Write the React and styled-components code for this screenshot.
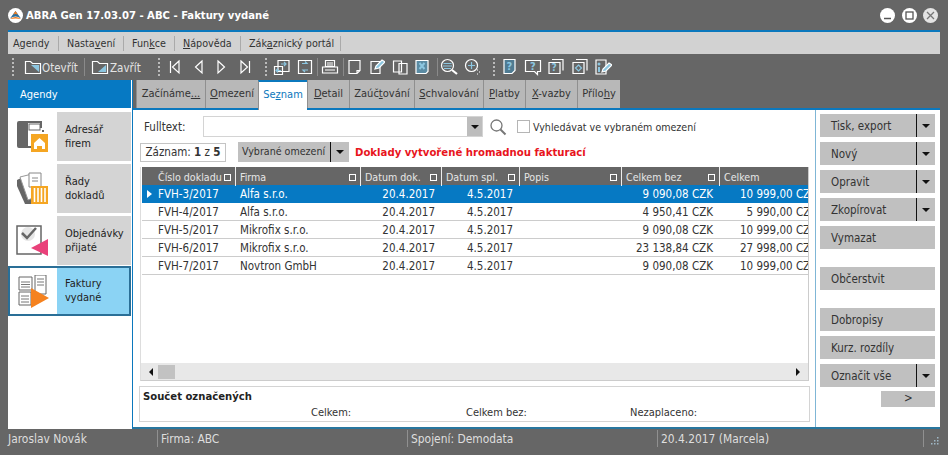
import React from "react";
import styled, { createGlobalStyle } from "styled-components";

const Global = createGlobalStyle`
  html, body { margin: 0; padding: 0; background: #666; overflow: hidden; }
  body { font-family: "DejaVu Sans Condensed", "DejaVu Sans", sans-serif; font-size: 11.5px; color: #333; }
  u { text-underline-offset: 1px; }
`;

const Window = styled.div`
  width: 948px;
  height: 455px;
  background: #666;
  display: flex;
  flex-direction: column;
`;

const TitleBar = styled.div`
  height: 30px;
  display: flex;
  align-items: center;
  padding: 0 10px 0 8px;
  color: #fff;
`;
const Title = styled.div`
  flex: 1;
  margin-left: 3px;
  font-size: 11.2px;
  font-weight: 700;
`;
const WinButton = styled.div`
  width: 15px;
  height: 15px;
  margin-left: 6.5px;
  border-radius: 50%;
  background: ${(p) => p.$bg || "#fff"};
  display: flex;
  align-items: center;
  justify-content: center;
`;

const MenuBar = styled.div`
  margin: 0 8px;
  height: 22px;
  border-top: 2px solid #0b78bd;
  background: #d2d2d2;
  display: flex;
  align-items: center;
  font-size: 10.7px;
`;
const MenuItem = styled.div`
  height: 15px;
  line-height: 15px;
  width: ${(p) => p.$w}px;
  box-sizing: border-box;
  padding-left: 8px;
  border-right: 1px solid #aaa;
  white-space: nowrap;
  &:first-child { padding-left: 5px; }
`;

const Toolbar = styled.div`
  height: 26px;
  margin: 0 8px;
  padding-left: 4px;
  display: flex;
  align-items: center;
  color: #e4e4e4;
`;
const Grip = styled.div`
  width: 0;
  height: 18px;
  margin-left: ${(p) => p.$ml || 0}px;
  border-left: 2px dotted #bbb;
`;
const ToolSep = styled.div`
  width: 1px;
  height: 18px;
  margin-left: ${(p) => p.$ml || 0}px;
  background: #8a8a8a;
`;
const ToolIcon = styled.svg`
  width: ${(p) => p.$w || 18}px;
  height: 18px;
  margin-left: ${(p) => p.$ml || 0}px;
  flex: none;
  fill: none;
  stroke: #fff;
  stroke-width: 1.2;
`;
const ToolLabel = styled.span`
  width: ${(p) => p.$w}px;
  margin-left: ${(p) => p.$ml || 0}px;
  padding-top: 1px;
  flex: none;
  white-space: nowrap;
`;

const Body = styled.div`
  flex: 1;
  display: flex;
  margin: 0 8px;
  min-height: 0;
`;
const LeftColumn = styled.div`
  width: 123px;
  flex: none;
  display: flex;
  flex-direction: column;
  background: #fff;
`;
const AgendaHead = styled.div`
  height: 28px;
  line-height: 29px;
  padding-left: 12px;
  background: #0679c3;
  color: #fff;
  font-size: 11px;
`;
const AgendaList = styled.div`
  padding-top: 4px;
  display: flex;
  flex-direction: column;
  gap: 3px;
  background: #fff;
  flex: 1;
`;
const AgendaItem = styled.div`
  height: ${(p) => (p.$active ? 46 : 49)}px;
  display: flex;
  border: ${(p) => (p.$active ? "2px solid #2a6f97" : "none")};
  background: ${(p) => (p.$active ? "#8bd3f4" : "#d4d4d4")};
  margin-top: ${(p) => (p.$active ? -2 : 0)}px;
`;
const AgendaIconBox = styled.div`
  width: ${(p) => (p.$active ? 47 : 49)}px;
  background: #fff;
  display: flex;
  align-items: center;
  justify-content: center;
  flex: none;
`;
const AgendaText = styled.div`
  padding-left: 8px;
  align-self: center;
  line-height: 14px;
  color: #222;
  font-size: 11px;
`;

const DoubleRule = styled.div`
  width: 2px;
  flex: none;
  background: linear-gradient(90deg, #fff 0 1px, #0b78bd 1px);
`;

const Main = styled.div`
  flex: 1;
  display: flex;
  flex-direction: column;
  min-width: 0;
`;
const Tabs = styled.div`
  height: 28px;
  display: flex;
  padding-left: 3px;
  font-size: 11px;
`;
const Tab = styled.div`
  width: ${(p) => p.$w}px;
  text-align: center;
  line-height: ${(p) => (p.$active ? 26 : 28)}px;
  white-space: nowrap;
  background: ${(p) => (p.$active ? "#fff" : "#b8b8b8")};
  color: ${(p) => (p.$active ? "#0b78bd" : "#333")};
  border-left: 1px solid #8f8f8f;
  box-sizing: border-box;
  height: ${(p) => (p.$active ? 30 : 28)}px;
  border-top: ${(p) => (p.$active ? "2px solid #0b78bd" : "none")};
  position: relative;
  z-index: 1;
`;
const Content = styled.div`
  flex: 1;
  display: flex;
  background: #fff;
  border-top: 2px solid #0b78bd;
  border-bottom: 2px solid #28779f;
  min-height: 0;
`;
const Center = styled.div`
  width: 683px;
  flex: none;
  box-sizing: border-box;
  padding: 6px 6px 5px 6px;
  border-right: 1px solid #7fb6d6;
  display: flex;
  flex-direction: column;
`;
const FilterRow = styled.div`
  height: 21px;
  display: flex;
  align-items: center;
`;
const FilterLabel = styled.div`
  width: 64px;
  padding-left: 5px;
  box-sizing: border-box;
`;
const Combo = styled.div`
  width: 280px;
  height: 21px;
  box-sizing: border-box;
  border: 1px solid #d4d4d4;
  display: flex;
  justify-content: flex-end;
`;
const ComboArrow = styled.div`
  width: 15px;
  background: #bdbdbd;
  display: flex;
  align-items: center;
  justify-content: center;
`;
const Caret = styled.div`
  width: 0;
  height: 0;
  border-left: 4px solid transparent;
  border-right: 4px solid transparent;
  border-top: 4px solid #111;
`;
const SearchIcon = styled.svg`
  width: 18px;
  height: 18px;
  margin-left: 6px;
  fill: none;
  stroke: #777;
  stroke-width: 1.3;
`;
const CheckBox = styled.div`
  width: 13px;
  height: 13px;
  margin-left: 10px;
  box-sizing: border-box;
  border: 1px solid #b5b5b5;
`;
const CheckLabel = styled.div`
  margin-left: 3px;
  font-size: 10.6px;
`;
const InfoRow = styled.div`
  height: 20px;
  margin-top: 5px;
  display: flex;
  align-items: center;
  padding-left: 1px;
`;
const Counter = styled.div`
  width: 86px;
  height: 19px;
  box-sizing: border-box;
  border: 1px solid #c4c4c4;
  line-height: 17px;
  text-align: center;
  white-space: nowrap;
  b { font-weight: 700; }
`;
const SplitButton = styled.div`
  height: ${(p) => p.$h || 23}px;
  width: ${(p) => p.$w || 115}px;
  margin-left: ${(p) => p.$ml || 0}px;
  margin-top: ${(p) => p.$mt || 0}px;
  flex: none;
  display: flex;
  background: #c0c0c0;
  color: #333;
`;
const SplitLabel = styled.div`
  flex: 1;
  white-space: nowrap;
  line-height: ${(p) => p.$lh || 24}px;
  padding-left: ${(p) => p.$pl || 11}px;
  font-size: ${(p) => p.$fs || 11.5}px;
`;
const SplitArrow = styled.div`
  width: 18px;
  flex: none;
  border-left: 1px solid #111;
  display: flex;
  align-items: center;
  justify-content: center;
`;
const RedNote = styled.div`
  margin-left: 6px;
  color: #e8141c;
  font-weight: 700;
  font-size: 11.25px;
`;

const TableWrap = styled.div`
  flex: 1;
  margin: 5px 0 0 1px;
  width: 669px;
  box-sizing: border-box;
  border-left: 1px solid #ddd;
  border-right: 1px solid #ccc;
  border-bottom: 1px solid #ccc;
  display: flex;
  flex-direction: column;
  min-height: 0;
  overflow: hidden;
`;
const TableGrid = styled.div`
  flex: 1;
  overflow: hidden;
  padding-left: 1px;
`;
const Row = styled.div`
  display: grid;
  grid-template-columns: 94px 125px 81px 78px 102px 98px 104px;
  width: 682px;
  height: 18px;
  line-height: 18px;
  box-sizing: border-box;
  background: ${(p) => (p.$selected ? "#0679c3" : "#fff")};
  color: ${(p) => (p.$selected ? "#fff" : "#333")};
  border-bottom: ${(p) => (p.$selected ? "none" : "1px solid #ccc")};
  white-space: nowrap;
`;
const HeadRow = styled(Row)`
  background: #666;
  color: #e6e6e6;
  border: none;
  font-size: 10.6px;
`;
const HeadCell = styled.div`
  display: flex;
  align-items: center;
  justify-content: space-between;
  padding: 1px 4px 0 ${(p) => p.$pl || 4}px;
  border-right: 1px solid #eee;
  box-sizing: border-box;
  &:last-child { border: none; }
`;
const FilterBox = styled.span`
  width: 7px;
  height: 7px;
  box-sizing: border-box;
  border: 1px solid #fff;
`;
const Cell = styled.div`
  padding: ${(p) => (p.$right ? "0 7px 0 0" : `0 0 0 ${p.$pl || 4}px`)};
  text-align: ${(p) => (p.$right ? "right" : "left")};
  position: relative;
`;
const RowMarker = styled.span`
  position: absolute;
  left: 5px;
  top: 5px;
  border-left: 5px solid #fff;
  border-top: 4px solid transparent;
  border-bottom: 4px solid transparent;
`;
const ScrollBar = styled.div`
  height: 17px;
  background: #e8e8e8;
  display: flex;
  align-items: center;
  padding: 0 8px;
`;
const ScrollLeft = styled.div`
  border-right: 4px solid #111;
  border-top: 4px solid transparent;
  border-bottom: 4px solid transparent;
`;
const ScrollRight = styled.div`
  border-left: 4px solid #111;
  border-top: 4px solid transparent;
  border-bottom: 4px solid transparent;
`;
const ScrollThumb = styled.div`
  width: 17px;
  height: 14px;
  margin-left: 5px;
  background: #c2c2c2;
  flex: none;
`;
const ScrollTrack = styled.div`
  flex: 1;
`;
const Summary = styled.div`
  height: 36px;
  margin-top: 5px;
  width: 671px;
  box-sizing: border-box;
  border: 1px solid #d4d4d4;
  padding: 2px 0 0 3px;
`;
const SummaryTitle = styled.div`
  font-weight: 700;
  font-size: 11.2px;
  color: #222;
  line-height: 15px;
`;
const SummaryRow = styled.div`
  display: flex;
  line-height: 16px;
  margin-top: 1px;
  font-size: 11px;
`;
const SummaryLabel = styled.span`
  width: ${(p) => p.$w}px;
  flex: none;
`;

const Side = styled.div`
  flex: 1;
  padding: 4px 0 0 4px;
  display: flex;
  flex-direction: column;
  gap: 5px;
`;

const StatusBar = styled.div`
  height: 25px;
  margin: 0 8px;
  display: flex;
  align-items: flex-start;
  color: #dedede;
  padding-top: 1px;
  font-size: 11.9px;
`;
const StatusCell = styled.div`
  width: ${(p) => p.$w}px;
  height: 17px;
  line-height: 18px;
  padding-left: ${(p) => p.$pl ?? 3}px;
  box-sizing: border-box;
  border-right: 1px solid #909090;
  flex: none;
`;
const ResizeGrip = styled.svg`
  width: 10px;
  height: 10px;
  margin: 7px 0 0 5px;
  fill: #9fb8c6;
`;

function Logo() {
  return (
    <svg width="15" height="15" viewBox="0 0 15 15">
      <circle cx="7.500" cy="7.500" r="7.500" fill="#fff" />
      <path d="M2 10.500 L7.500 3 L13 10.500 Q7.500 6.500 2 10.500z" fill="#2d6f9c" />
      <path d="M2 11 Q7.500 6.800 13 11 Q7.500 9.800 2 11z" fill="#ef7d22" />
      <path d="M5.200 6.500 L7.500 3 L9.800 6.500 Q7.500 5.500 5.200 6.500z" fill="#ef7d22" />
    </svg>
  );
}

const Folder = ({ ml, variant }) => (
  <ToolIcon $ml={ml} viewBox="0 0 18 18">
    <path d="M1.500 3.500h5l2 2h8v10h-15z" />
    <path d={variant ? "M15 7v7H7z" : "M7 7h8v7z"} fill="#8cc6e0" stroke="none" />
  </ToolIcon>
);

const Nav = ({ ml, d, line }) => (
  <ToolIcon $ml={ml} $w={12} viewBox="0 0 12 18">
    <path d={d} />
    {line && <path d={line} />}
  </ToolIcon>
);

const Tool = ({ ml, w, children }) => (
  <ToolIcon $ml={ml} $w={w} viewBox={`0 0 ${w || 18} 18`}>
    {children}
  </ToolIcon>
);

const Blue = "#8cc6e0";

const AgendaIcons = {
  firms: (
    <svg width="33" height="33" viewBox="0 0 33 33">
      <path d="M1 3a2 2 0 0 1 2-2h23v7h-2v20H3a2 2 0 0 1-2-2z" fill="#666" />
      <path d="M12 3h12v23H12z" fill="#fff" />
      <rect x="13" y="4" width="11" height="6" fill="#fff" stroke="#666" />
      <path d="M26 10h2v2h-2z" fill="#666" />
      <rect x="15" y="14" width="17" height="18" fill="#f5a623" />
      <path d="M18 23l5.500-5 5.500 5v6h-3v-3h-5v3h-3z" fill="#fff" />
    </svg>
  ),
  series: (
    <svg width="33" height="33" viewBox="0 0 33 33">
      <path d="M1 8l6-3 10 27H9l-8-18z" fill="#666" />
      <path d="M4 5l12-3 6 22-10 4z" fill="#fff" stroke="#999" />
      <path d="M13 1h12v14H13z" fill="#fff" stroke="#888" />
      <path d="M16 6h6M16 9h6" stroke="#888" />
      <path d="M15 14h17v18H15z" fill="#f5a623" />
      <path d="M18.500 16v14M22 16v14M25.500 16v14M29 16v14" stroke="#fff" strokeWidth="1.600" />
    </svg>
  ),
  orders: (
    <svg width="33" height="33" viewBox="0 0 33 33">
      <rect x="1" y="2" width="24" height="28" fill="#fff" stroke="#666" strokeWidth="1.500" />
      <circle cx="12" cy="10" r="7" fill="#e6e6e6" />
      <path d="M6 9l5 5 9-10" fill="none" stroke="#666" strokeWidth="2.500" />
      <path d="M32 15v17L15 24z" fill="#e9417a" />
    </svg>
  ),
  invoices: (
    <svg width="33" height="33" viewBox="0 0 33 33">
      <path d="M2 2h13v13H2zM18 0h11v19H18zM2 17h12v13H2z" fill="#fff" stroke="#666" />
      <path d="M4 7h9M4 9.500h9M4 12h9M20 4h7M20 7h7M20 10h7M4 21h8M4 24h8M4 27h8" stroke="#777" />
      <path d="M14 13l18 10-18 10z" fill="#f5821f" />
    </svg>
  ),
};

const columns = ["Číslo dokladu", "Firma", "Datum dok.", "Datum spl.", "Popis", "Celkem bez", "Celkem"];
const rows = [
  ["FVH-3/2017", "Alfa s.r.o.", "20.4.2017", "4.5.2017", "9 090,08 CZK", "10 999,00 CZK"],
  ["FVH-4/2017", "Alfa s.r.o.", "20.4.2017", "4.5.2017", "4 950,41 CZK", "5 990,00 CZK"],
  ["FVH-5/2017", "Mikrofix s.r.o.", "20.4.2017", "4.5.2017", "9 090,08 CZK", "10 999,00 CZK"],
  ["FVH-6/2017", "Mikrofix s.r.o.", "20.4.2017", "4.5.2017", "23 138,84 CZK", "27 998,00 CZK"],
  ["FVH-7/2017", "Novtron GmbH", "20.4.2017", "4.5.2017", "9 090,08 CZK", "10 999,00 CZK"],
];

const Split = ({ children }) => (
  <SplitButton>
    <SplitLabel>{children}</SplitLabel>
    <SplitArrow><Caret /></SplitArrow>
  </SplitButton>
);
const Plain = ({ children, mt }) => (
  <SplitButton $mt={mt}>
    <SplitLabel>{children}</SplitLabel>
  </SplitButton>
);

export default function App() {
  return (
    <Window>
      <Global />
      <TitleBar>
        <Logo />
        <Title>ABRA Gen 17.03.07 - ABC - Faktury vydané</Title>
        <WinButton>
          <svg width="9" height="9" viewBox="0 0 9 9"><path d="M1 7.500h7" stroke="#555" strokeWidth="1.500" /></svg>
        </WinButton>
        <WinButton>
          <svg width="9" height="9" viewBox="0 0 9 9"><rect x="1" y="1" width="7" height="7" fill="none" stroke="#555" strokeWidth="1.300" /></svg>
        </WinButton>
        <WinButton $bg="#e4e4e4">
          <svg width="9" height="9" viewBox="0 0 9 9"><path d="M1 1l7 7M8 1l-7 7" stroke="#777" strokeWidth="1.300" /></svg>
        </WinButton>
      </TitleBar>

      <MenuBar>
        <MenuItem $w={51}>A<u>g</u>endy</MenuItem>
        <MenuItem $w={65}>Nasta<u>v</u>ení</MenuItem>
        <MenuItem $w={51}>Fun<u>k</u>ce</MenuItem>
        <MenuItem $w={66}><u>N</u>ápověda</MenuItem>
        <MenuItem $w={100}>Zák<u>a</u>znický portál</MenuItem>
      </MenuBar>

      <Toolbar>
        <Grip />
        <Folder ml={10} />
        <ToolLabel $w={35}>Otevřít</ToolLabel>
        <ToolSep $ml={7} />
        <Folder ml={6} variant />
        <ToolLabel $w={28} $ml={1}>Zavřít</ToolLabel>
        <Grip $ml={20} />
        <Nav ml={9} d="M10 3L3.500 9l6.500 6z" line="M1.500 3v12" />
        <Nav ml={11} d="M10 3L3.500 9l6.500 6z" />
        <Nav ml={12} d="M2 3l6.500 6L2 15z" />
        <Nav ml={11} d="M2 3l6.500 6L2 15z" line="M10.500 3v12" />
        <Grip $ml={14} />
        <Tool ml={6}>
          <path d="M5 2.500h11v11H5zM1.500 8.500h8v8h-8z" />
          <path d="M8 6h5m-2-2l2 2-2 2M8 12.500H3m2-2l-2 2 2 2" stroke={Blue} />
        </Tool>
        <Tool ml={6} w={16}>
          <path d="M1.500 2.500h13v13h-13z" />
          <path d="M5 5.500h5l-2-2M11 12H6l2 2" stroke={Blue} />
        </Tool>
        <ToolSep $ml={4} />
        <Tool ml={3}>
          <path d="M4.500 2.500h9v6h-9zM1.500 9h15v6h-15zM6 5h6M6 7h6M4 12h10" />
        </Tool>
        <ToolSep $ml={4} />
        <Tool ml={3} w={15}>
          <path d="M2 2.500h11v10l-3 3H2zM13 12.500h-3v3" />
        </Tool>
        <Tool ml={7} w={16}>
          <path d="M2 3.500h9v12H2z" />
          <path d="M6 11l1-3 6-6 3 2-6 6z" fill={Blue} />
        </Tool>
        <Tool ml={7} w={16}>
          <path d="M1.500 3h8v11h-8zM7 5.500h8V16H7z" />
        </Tool>
        <Tool ml={6} w={16}>
          <path d="M2 2.500h12v11l-2 2H2z" fill="#5b8ba3" />
          <path d="M5.500 5l5 6M10.500 5l-5 6" stroke={Blue} strokeWidth="2" />
        </Tool>
        <ToolSep $ml={7} />
        <Tool ml={2}>
          <circle cx="7.500" cy="7.500" r="6" />
          <path d="M3.500 5.500h8M3 8h9M4 10.500h7" stroke={Blue} />
          <path d="M12 12l5 4" strokeWidth="2.200" />
        </Tool>
        <Tool ml={6}>
          <circle cx="7.500" cy="7.500" r="6" />
          <path d="M7.500 4v7M4 7.500h7" stroke={Blue} />
          <path d="M13 12h1M15 14h1M13 16h1" />
        </Tool>
        <Grip $ml={11} />
        <Tool ml={7} w={16}>
          <path d="M2 1.500h11v11l-3 3H2z" fill="#4f7b92" />
          <text x="4.500" y="11.500" fontSize="11" fontWeight="700" fill={Blue} stroke="none">?</text>
        </Tool>
        <Tool ml={6}>
          <path d="M1.500 2.500h15v11h-3v3l-3-3h-9z" />
          <text x="6" y="11.500" fontSize="11" fontWeight="700" fill={Blue} stroke="none">?</text>
        </Tool>
        <Tool ml={5}>
          <path d="M5 1.500h11v11M2 4.500h11v11H2z" />
          <text x="4.500" y="13" fontSize="10" fontWeight="700" fill={Blue} stroke="none">?</text>
        </Tool>
        <Tool ml={6}>
          <path d="M5 1.500h11v11M2 4.500h11v11H2z" />
          <path d="M7.500 7l3 3-3 3-3-3z" stroke={Blue} />
        </Tool>
        <Tool ml={5}>
          <path d="M2 2h10v14H2z" />
          <circle cx="5" cy="6" r="1.500" fill={Blue} stroke="none" />
          <path d="M5 9v5" stroke={Blue} strokeWidth="2" />
          <path d="M8 14l1-3 6-6 3 2-6 6z" fill={Blue} />
        </Tool>
      </Toolbar>

      <Body>
        <LeftColumn>
          <AgendaHead>Agendy</AgendaHead>
          <AgendaList>
            <AgendaItem>
              <AgendaIconBox>{AgendaIcons.firms}</AgendaIconBox>
              <AgendaText>Adresář<br />firem</AgendaText>
            </AgendaItem>
            <AgendaItem>
              <AgendaIconBox>{AgendaIcons.series}</AgendaIconBox>
              <AgendaText>Řady<br />dokladů</AgendaText>
            </AgendaItem>
            <AgendaItem>
              <AgendaIconBox>{AgendaIcons.orders}</AgendaIconBox>
              <AgendaText>Objednávky<br />přijaté</AgendaText>
            </AgendaItem>
            <AgendaItem $active>
              <AgendaIconBox $active>{AgendaIcons.invoices}</AgendaIconBox>
              <AgendaText>Faktury<br />vydané</AgendaText>
            </AgendaItem>
          </AgendaList>
        </LeftColumn>
        <DoubleRule />
        <Main>
          <Tabs>
            <Tab $w={69}>Začínáme<u>...</u></Tab>
            <Tab $w={53}><u>O</u>mezení</Tab>
            <Tab $w={49} $active>Se<u>z</u>nam</Tab>
            <Tab $w={42}><u>D</u>etail</Tab>
            <Tab $w={65}>Zaúč<u>t</u>ování</Tab>
            <Tab $w={69}><u>S</u>chvalování</Tab>
            <Tab $w={42}><u>P</u>latby</Tab>
            <Tab $w={52}><u>X</u>-vazby</Tab>
            <Tab $w={43}>Přílo<u>h</u>y</Tab>
          </Tabs>
          <Content>
            <Center>
              <FilterRow>
                <FilterLabel>Fulltext:</FilterLabel>
                <Combo><ComboArrow><Caret /></ComboArrow></Combo>
                <SearchIcon viewBox="0 0 18 18">
                  <circle cx="7.500" cy="7.500" r="5.500" />
                  <path d="M11.500 11.500l5 5" strokeWidth="2" />
                </SearchIcon>
                <CheckBox />
                <CheckLabel>Vyhledávat ve vybraném omezení</CheckLabel>
              </FilterRow>
              <InfoRow>
                <Counter>Záznam: <b>1</b> z <b>5</b></Counter>
                <SplitButton $w={111} $h={20} $ml={12}>
                  <SplitLabel $lh={19} $pl={4} $fs={10.6}>Vybrané omezení</SplitLabel>
                  <SplitArrow><Caret /></SplitArrow>
                </SplitButton>
                <RedNote>Doklady vytvořené hromadnou fakturací</RedNote>
              </InfoRow>
              <TableWrap>
                <TableGrid>
                  <HeadRow>
                    {columns.map((c, i) => (
                      <HeadCell key={c} $pl={i === 0 ? 16 : 4}>
                        {c}
                        {i < 6 && <FilterBox />}
                      </HeadCell>
                    ))}
                  </HeadRow>
                  {rows.map((r, i) => (
                    <Row key={r[0]} $selected={i === 0}>
                      <Cell $pl={16}>{i === 0 && <RowMarker />}{r[0]}</Cell>
                      <Cell>{r[1]}</Cell>
                      <Cell $right>{r[2]}</Cell>
                      <Cell $right>{r[3]}</Cell>
                      <Cell />
                      <Cell $right>{r[4]}</Cell>
                      <Cell $right>{r[5]}</Cell>
                    </Row>
                  ))}
                </TableGrid>
                <ScrollBar>
                  <ScrollLeft />
                  <ScrollThumb />
                  <ScrollTrack />
                  <ScrollRight />
                </ScrollBar>
              </TableWrap>
              <Summary>
                <SummaryTitle>Součet označených</SummaryTitle>
                <SummaryRow>
                  <SummaryLabel $w={168} />
                  <SummaryLabel $w={155}>Celkem:</SummaryLabel>
                  <SummaryLabel $w={164}>Celkem bez:</SummaryLabel>
                  <SummaryLabel $w={80}>Nezaplaceno:</SummaryLabel>
                </SummaryRow>
              </Summary>
            </Center>
            <Side>
              <Split>Tisk, export</Split>
              <Split>Nový</Split>
              <Split>Opravit</Split>
              <Split>Zkopírovat</Split>
              <Plain>Vymazat</Plain>
              <Plain mt={13}>Občerstvit</Plain>
              <Plain mt={13}>Dobropisy</Plain>
              <Plain>Kurz. rozdíly</Plain>
              <Split>Označit vše</Split>
              <SplitButton $w={54} $h={16} $ml={61} $mt={-1}>
                <SplitLabel $lh={15} $pl={23}>&gt;</SplitLabel>
              </SplitButton>
            </Side>
          </Content>
        </Main>
      </Body>

      <StatusBar>
        <StatusCell $w={150} $pl={0}>Jaroslav Novák</StatusCell>
        <StatusCell $w={250}>Firma: ABC</StatusCell>
        <StatusCell $w={250}>Spojení: Demodata</StatusCell>
        <StatusCell $w={266}>20.4.2017 (Marcela)</StatusCell>
        <ResizeGrip viewBox="0 0 10 10">
          <rect x="8" y="0" width="1.500" height="1.500" />
          <rect x="5" y="3" width="1.500" height="1.500" />
          <rect x="8" y="3" width="1.500" height="1.500" />
          <rect x="2" y="6" width="1.500" height="1.500" />
          <rect x="5" y="6" width="1.500" height="1.500" />
          <rect x="8" y="6" width="1.500" height="1.500" />
        </ResizeGrip>
      </StatusBar>
    </Window>
  );
}
